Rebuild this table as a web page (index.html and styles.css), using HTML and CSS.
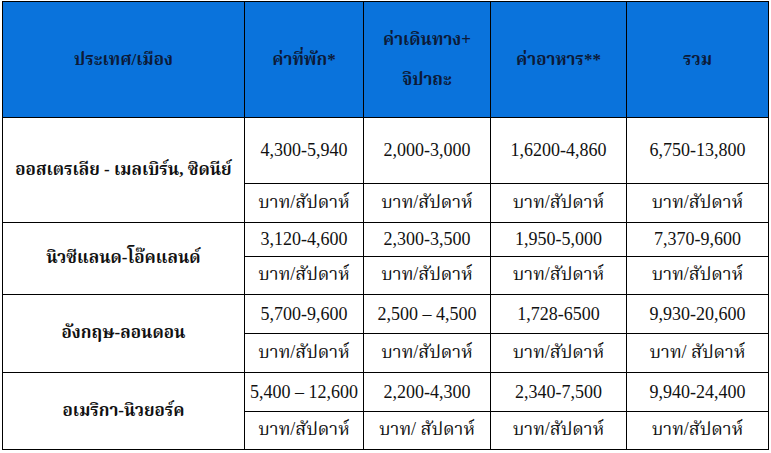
FILE: index.html
```html
<!DOCTYPE html>
<html lang="th">
<head>
<meta charset="utf-8">
<link rel="stylesheet" href="styles.css">
</head>
<body>
<table class="cost">
  <colgroup>
    <col class="c1"><col class="c2"><col class="c3"><col class="c4"><col class="c5">
  </colgroup>
  <thead>
    <tr class="head">
      <th>ประเทศ/เมือง</th>
      <th>ค่าที่พัก*</th>
      <th>ค่าเดินทาง+<br>จิปาถะ</th>
      <th>ค่าอาหาร**</th>
      <th>รวม</th>
    </tr>
  </thead>
  <tbody>
    <tr class="h66">
      <td rowspan="2" class="city">ออสเตรเลีย - เมลเบิร์น, ซิดนีย์</td>
      <td>4,300-5,940</td><td>2,000-3,000</td><td>1,6200-4,860</td><td>6,750-13,800</td>
    </tr>
    <tr class="h39">
      <td>บาท/สัปดาห์</td><td>บาท/สัปดาห์</td><td>บาท/สัปดาห์</td><td>บาท/สัปดาห์</td>
    </tr>
    <tr class="h34">
      <td rowspan="2" class="city">นิวซีแลนด-โอ๊คแลนด์</td>
      <td>3,120-4,600</td><td>2,300-3,500</td><td>1,950-5,000</td><td>7,370-9,600</td>
    </tr>
    <tr class="h38">
      <td>บาท/สัปดาห์</td><td>บาท/สัปดาห์</td><td>บาท/สัปดาห์</td><td>บาท/สัปดาห์</td>
    </tr>
    <tr class="h39">
      <td rowspan="2" class="city">อังกฤษ-ลอนดอน</td>
      <td>5,700-9,600</td><td>2,500 – 4,500</td><td>1,728-6500</td><td>9,930-20,600</td>
    </tr>
    <tr class="h39">
      <td>บาท/สัปดาห์</td><td>บาท/สัปดาห์</td><td>บาท/สัปดาห์</td><td>บาท/ สัปดาห์</td>
    </tr>
    <tr class="h39">
      <td rowspan="2" class="city">อเมริกา-นิวยอร์ค</td>
      <td>5,400 – 12,600</td><td>2,200-4,300</td><td>2,340-7,500</td><td>9,940-24,400</td>
    </tr>
    <tr class="h38">
      <td>บาท/สัปดาห์</td><td>บาท/ สัปดาห์</td><td>บาท/สัปดาห์</td><td>บาท/สัปดาห์</td>
    </tr>
  </tbody>
</table>
</body>
</html>
```

FILE: styles.css
```css
html, body {
  margin: 0;
  padding: 0;
  background: #ffffff;
}

body {
  padding: 1px 0 0 2px;
}

.cost {
  border-collapse: collapse;
  table-layout: fixed;
  width: 766px;
  font-family: "Liberation Serif", "Times New Roman", "Kinnari", "Norasi", "Noto Serif Thai", "Tlwg Typo", "Garuda", serif;
  font-size: 18px;
  color: #111111;
}

.c1 { width: 242px; }
.c2 { width: 119px; }
.c3 { width: 127px; }
.c4 { width: 136px; }
.c5 { width: 142px; }

.cost th,
.cost td {
  border: 1px solid #000000;
  text-align: center;
  vertical-align: middle;
  padding: 0;
}

.head {
  height: 116px;
}

.head th {
  background: #0a73dc;
  color: #0c1a38;
  font-weight: bold;
  font-size: 17px;
  line-height: 40px;
}

.city {
  font-weight: bold;
  font-size: 17px;
  white-space: nowrap;
}

.h66 { height: 66px; }
.h39 { height: 39px; }
.h38 { height: 38px; }
.h34 { height: 34px; }
```
